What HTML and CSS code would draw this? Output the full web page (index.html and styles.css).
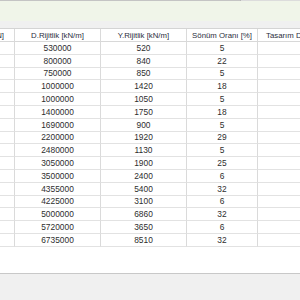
FILE: index.html
```html
<!DOCTYPE html>
<html lang="tr">
<head>
    <meta charset="UTF-8">
    <title>Kat Rijitlikleri</title>
    <link rel="stylesheet" href="styles.css">
</head>
<body>
    <div class="window">
        <div class="top-edge">
            <div class="edge-left"></div>
            <div class="edge-right"></div>
        </div>
        <div class="info-bar"></div>
        <div class="grid-head-gap"></div>

        <!-- Rijitlik tablosu -->
        <div class="table">
            <div class="cell head first"><span>Kat Kütlesi [kN]</span></div>
            <div class="cell head">D.Rijitlik [kN/m]</div>
            <div class="cell head">Y.Rijitlik [kN/m]</div>
            <div class="cell head">Sönüm Oranı [%]</div>
            <div class="cell head last">Tasarım Deprem Seviyesi</div>
        </div>
        <div class="table body" id="rows"></div>

        <div class="empty-space"></div>
        <div class="status-bar"></div>
        <div class="bottom-edge">
            <div class="bottom-left"></div>
            <div class="bottom-right"></div>
        </div>
    </div>

    <script>
        const rows = [
            [530000, 520, 5], [800000, 840, 22], [750000, 850, 5], [1000000, 1420, 18],
            [1000000, 1050, 5], [1400000, 1750, 18], [1690000, 900, 5], [2200000, 1920, 29],
            [2480000, 1130, 5], [3050000, 1900, 25], [3500000, 2400, 6], [4355000, 5400, 32],
            [4225000, 3100, 6], [5000000, 6860, 32], [5720000, 3650, 6], [6735000, 8510, 32]
        ];

        const body = document.getElementById('rows');
        rows.forEach(r => {
            body.innerHTML += `<div class="cell first"></div>` +
                `<div class="cell">${r[0]}</div>` +
                `<div class="cell">${r[1]}</div>` +
                `<div class="cell">${r[2]}</div>` +
                `<div class="cell last"></div>`;
        });
    </script>
</body>
</html>
```

FILE: styles.css
```css
body {
    margin: 0;
    overflow: hidden;
    font-family: 'Liberation Sans', Arial, sans-serif;
    font-size: 8.4px;
    color: #2e2e2e;
    background-color: #fff;
}

.window {
    width: 300px;
    height: 300px;
    display: flex;
    flex-direction: column;
    overflow: hidden;
}

.top-edge {
    display: flex;
    height: 1px;
    flex-shrink: 0;
}

.edge-left {
    width: 240px;
    background-color: #c4c4c4;
}

.edge-right {
    flex: 1;
    background-color: #dcdcdc;
    border-left: 1px solid #b8b8b8;
}

.info-bar {
    height: 20px;
    flex-shrink: 0;
    background-color: #f0f5e9;
}

.grid-head-gap {
    height: 7px;
    flex-shrink: 0;
    background-color: #f0f0f0;
    border-bottom: 1px solid #d4d4d4;
}

.table {
    display: grid;
    grid-template-columns: 15px 86px 86px 71px 101px;
    width: 359px;
    flex-shrink: 0;
}

.cell {
    height: 12.8px;
    display: flex;
    align-items: center;
    justify-content: center;
    white-space: nowrap;
    overflow: hidden;
    border-right: 1px solid #dadada;
    border-bottom: 1px solid #e2e2e2;
    box-sizing: border-box;
}

.cell.head {
    height: 13px;
    font-size: 7.8px;
    color: #2a2d3c;
    border-bottom: 1px solid #d8d8d8;
}

.cell.first {
    justify-content: flex-end;
    padding-right: 10px;
}

.cell.last {
    justify-content: flex-start;
    padding-left: 8px;
    border-right: none;
}

.empty-space {
    height: 26px;
    flex-shrink: 0;
}

.status-bar {
    height: 26px;
    flex-shrink: 0;
    background-color: #f0f0f0;
    border-top: 1px solid #c8c8c8;
}

.bottom-edge {
    display: flex;
    height: 2px;
    flex-shrink: 0;
}

.bottom-left {
    width: 251px;
    background-color: #a8a8a8;
}

.bottom-right {
    flex: 1;
    background-color: #c0504d;
}
```
